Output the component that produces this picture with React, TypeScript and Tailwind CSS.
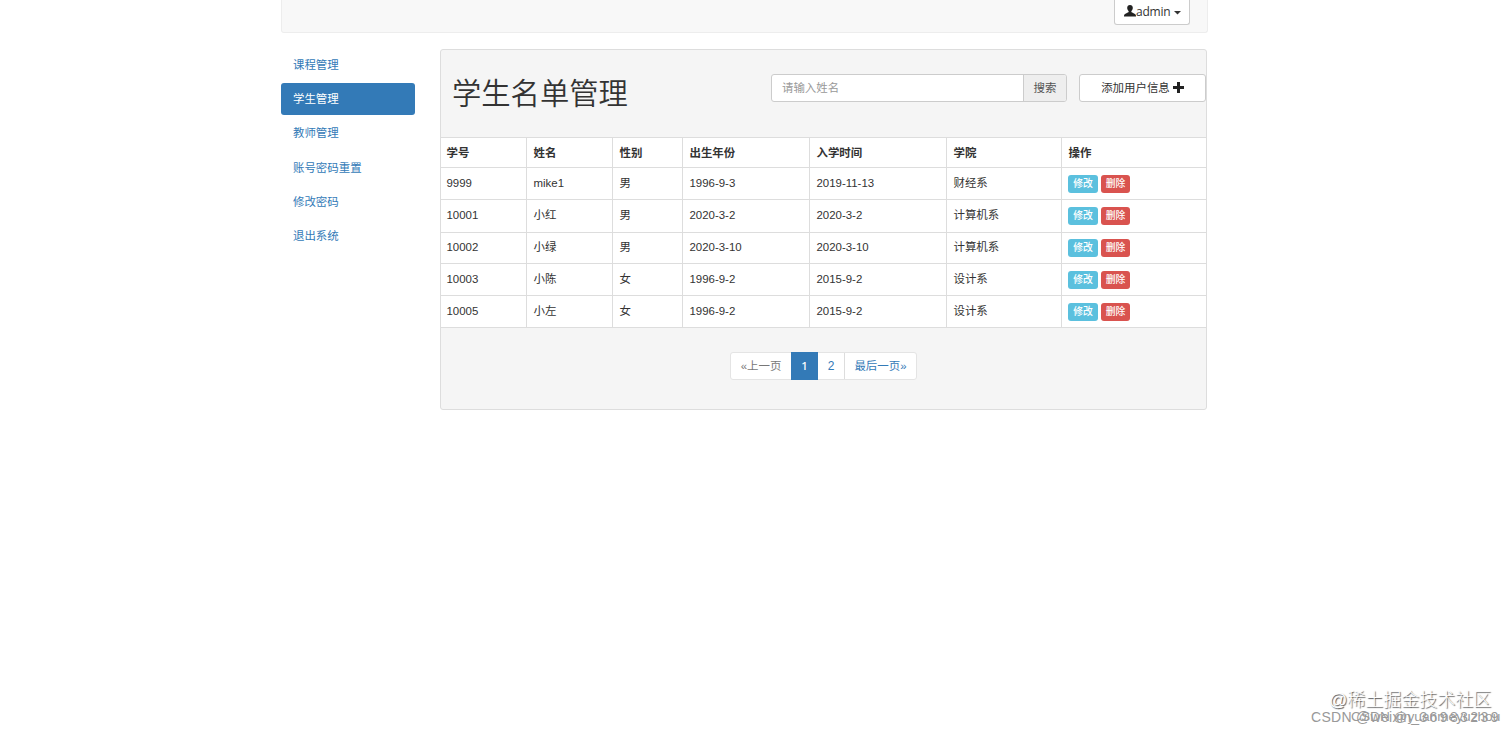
const menu = ['课程管理', '学生管理', '教师管理', '账号密码重置', '修改密码', '退出系统'];
const columns = ['学号', '姓名', '性别', '出生年份', '入学时间', '学院', '操作'];
const students = [
  { h: 'h-8', cells: ['9999', 'mike1', '男', '1996-9-3', '2019-11-13', '财经系'] },
  { h: 'h-[33px]', cells: ['10001', '小红', '男', '2020-3-2', '2020-3-2', '计算机系'] },
  { h: 'h-[31px]', cells: ['10002', '小绿', '男', '2020-3-10', '2020-3-10', '计算机系'] },
  { h: 'h-8', cells: ['10003', '小陈', '女', '1996-9-2', '2015-9-2', '设计系'] },
  { h: 'h-8', cells: ['10005', '小左', '女', '1996-9-2', '2015-9-2', '设计系'] },
];
const grid = 'grid grid-cols-[86px_86px_70px_127px_137px_115px_1fr] border-t border-[#ddd] bg-white';

function UserIcon() {
  return (
    <svg className="mb-[2px]" width="12" height="12" viewBox="0 0 12 12" fill="#222">
      <path d="M6 0C4.200 0 3.200 1.100 3.200 2.800C3.200 4.200 3.700 5.300 4.500 6C4.800 6.300 4.800 7 4.400 7.300C3 8.200 0.900 8.700 0.300 9.700C0 10.300 0 10.800 0 11.500H12C12 10.800 12 10.300 11.700 9.700C11.100 8.700 9 8.200 7.600 7.300C7.200 7 7.200 6.300 7.500 6C8.300 5.300 8.800 4.200 8.800 2.800C8.800 1.100 7.800 0 6 0Z" />
    </svg>
  );
}

function Header() {
  return (
    <header className="flex h-[33px] justify-end rounded-b-[3px] border border-t-0 border-[#ededed] bg-[#f8f8f8] pr-4">
      <button className="mr-px flex h-[25px] w-[76px] items-center rounded-b-[3px] border border-t-0 border-[#ccc] bg-white pl-[9px] font-['Open_Sans','Noto_Sans',sans-serif] text-[12px] text-[#333]">
        <UserIcon />
        <span className="leading-none tracking-[-0.2px]">admin</span>
        <svg className="ml-[3px] mt-px" width="7" height="4" viewBox="0 0 7 4" fill="#333">
          <path d="M0 0H7L3.500 3.500Z" />
        </svg>
      </button>
    </header>
  );
}

function Sidebar() {
  return (
    <nav className="flex w-[134px] flex-col gap-[2px]">
      {menu.map((item) => (
        <a
          key={item}
          className={
            item === '学生管理'
              ? 'flex h-[32.2px] items-center rounded-[3px] bg-[#337ab7] pl-3 text-white'
              : 'flex h-[32.2px] items-center pl-3 text-[#337ab7]'
          }
        >
          {item}
        </a>
      ))}
    </nav>
  );
}

function StudentTable() {
  return (
    <div className="border-b border-[#ddd]">
      <div className={`${grid} h-[30px]`}>
        {columns.map((c) => (
          <div key={c} className="flex items-center border-r border-[#ddd] pl-[6.5px] font-bold first:pl-[5.5px] last:border-r-0">
            {c}
          </div>
        ))}
      </div>
      {students.map((s) => (
        <div key={s.cells[0]} className={`${grid} ${s.h}`}>
          {s.cells.map((c, i) => (
            <div key={i} className="flex items-center border-r border-[#ddd] pb-[2px] pl-[6.5px] first:pl-[5.5px]">
              {c}
            </div>
          ))}
          <div className="flex items-center gap-[3px] pl-[6px] text-[9.8px] font-medium text-white">
            <span className="flex h-[18px] w-[30px] items-center justify-center rounded-[3px] bg-[#5bc0de]">修改</span>
            <span className="flex h-[18px] w-[29px] items-center justify-center rounded-[3px] bg-[#d9534f]">删除</span>
          </div>
        </div>
      ))}
    </div>
  );
}

function Pagination() {
  return (
    <div className="ml-[289px] mt-6 flex h-7 w-[187px] rounded-[3px] border border-[#e4e4e4] bg-white text-[#337ab7]">
      <span className="flex w-[60px] items-center justify-center text-[#777]">«上一页</span>
      <span className="-my-px flex w-[27px] items-center justify-center bg-[#337ab7] font-['Noto_Sans',sans-serif] font-medium text-white">1</span>
      <span className="flex w-[27px] items-center justify-center border-r border-[#ddd] text-[12px]">2</span>
      <span className="flex flex-1 items-center justify-center">最后一页»</span>
    </div>
  );
}

export default function App() {
  return (
    <div className="relative h-[732px] overflow-hidden bg-white font-['Liberation_Sans','Noto_Sans_CJK_SC',sans-serif] text-[11.45px] leading-4 text-[#333]">
      <div className="ml-[281px] w-[927px]">
        <Header />
        <div className="mt-4 flex gap-[25px]">
          <Sidebar />
          <main className="h-[361px] w-[767px] rounded-[3px] border border-[#ddd] bg-[#f5f5f5]">
            <div className="flex h-[87px] items-start pl-[11px] pt-6">
              <h1 className="w-[319px] shrink-0 whitespace-nowrap pt-px text-[29.3px] font-[350] leading-[38px]">学生名单管理</h1>
              <div className="flex h-7 w-[296px] shrink-0 overflow-hidden rounded-[3px] border border-[#ccc] bg-white">
                <div className="flex flex-1 items-center pl-[10px] text-[#999]">请输入姓名</div>
                <div className="flex w-[43px] items-center justify-center border-l border-[#ccc] bg-[#eee] text-[#555]">搜索</div>
              </div>
              <button className="ml-3 flex h-7 w-[127px] shrink-0 items-center justify-center gap-[3px] rounded-[3px] border border-[#ccc] bg-white">
                添加用户信息
                <svg className="mb-px" width="11" height="11" viewBox="0 0 11 11" fill="#222">
                  <path d="M4 0H7V4H11V7H7V11H4V7H0V4H4Z" />
                </svg>
              </button>
            </div>
            <StudentTable />
            <Pagination />
          </main>
        </div>
      </div>
      <div className="absolute left-[1329px] top-[689px] whitespace-nowrap text-[18px] font-light leading-[22px] text-white [text-shadow:1px_1px_1px_#555]">@稀土掘金技术社区</div>
      <div className="absolute left-[1311px] top-[708px] whitespace-nowrap text-[14px] leading-[18px] tracking-[0.3px] text-[#999]">
        CSDN @weixin_<span className="tracking-[2.4px]">36983239</span>
      </div>
      <div className="absolute left-[1351px] top-[708px] whitespace-nowrap text-[13.7px] leading-[18px] text-[#999]">CSDN @yuanmeyuzhou</div>
    </div>
  );
}
